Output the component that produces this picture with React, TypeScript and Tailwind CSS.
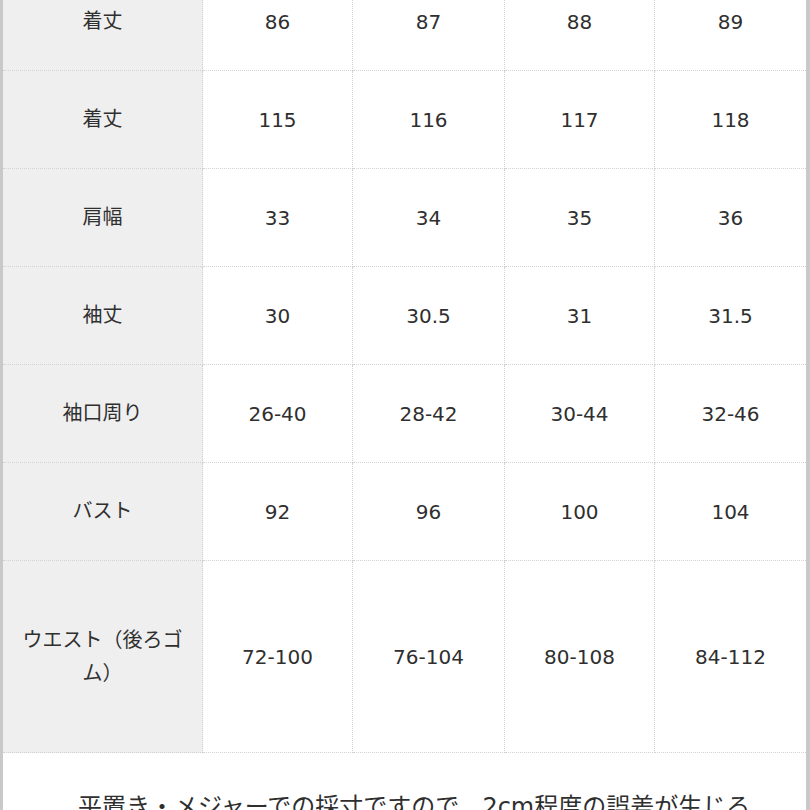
const columns = ['S', 'M', 'L', 'XL'];

const rows: { label: string; values: string[]; tall?: boolean }[] = [
  { label: '着丈', values: ['86', '87', '88', '89'] },
  { label: '着丈', values: ['115', '116', '117', '118'] },
  { label: '肩幅', values: ['33', '34', '35', '36'] },
  { label: '袖丈', values: ['30', '30.5', '31', '31.5'] },
  { label: '袖口周り', values: ['26-40', '28-42', '30-44', '32-46'] },
  { label: 'バスト', values: ['92', '96', '100', '104'] },
  { label: 'ウエスト（後ろゴム）', values: ['72-100', '76-104', '80-108', '84-112'], tall: true },
];

export default function App() {
  return (
    <div
      className="w-[810px] h-[810px] overflow-hidden bg-white border-l-[3px] border-r-[4px] border-[#c9c9c9] text-[#2f2f2f]"
      style={{ fontFamily: '"DejaVu Sans", "Noto Sans CJK JP", sans-serif' }}
    >
      <div className="-mt-[27px]">
        <div className="grid grid-cols-[200px_150px_152px_150px_1fr]">
          {rows.map((row, i) => (
            <div key={i} className="contents">
              <div
                className={`flex items-center justify-center px-[10px] bg-[#efefef] border-r border-b border-dotted border-[#d2d2d2] text-center text-[20px] leading-[33px] ${
                  row.tall ? 'h-[192px]' : 'h-[98px]'
                }`}
              >
                {row.label}
              </div>
              {row.values.map((v, j) => (
                <div
                  key={columns[j]}
                  className={`flex items-center justify-center border-b border-dotted border-[#d2d2d2] text-[20px] ${
                    j < 3 ? 'border-r' : ''
                  } ${row.tall ? 'h-[192px]' : 'h-[98px]'}`}
                >
                  {v}
                </div>
              ))}
            </div>
          ))}
        </div>
        <p className="pt-[36px] pl-[75px] text-[24px] leading-[36px] whitespace-nowrap">
          平置き・メジャーでの採寸ですので、2cm程度の誤差が生じる
        </p>
      </div>
    </div>
  );
}
